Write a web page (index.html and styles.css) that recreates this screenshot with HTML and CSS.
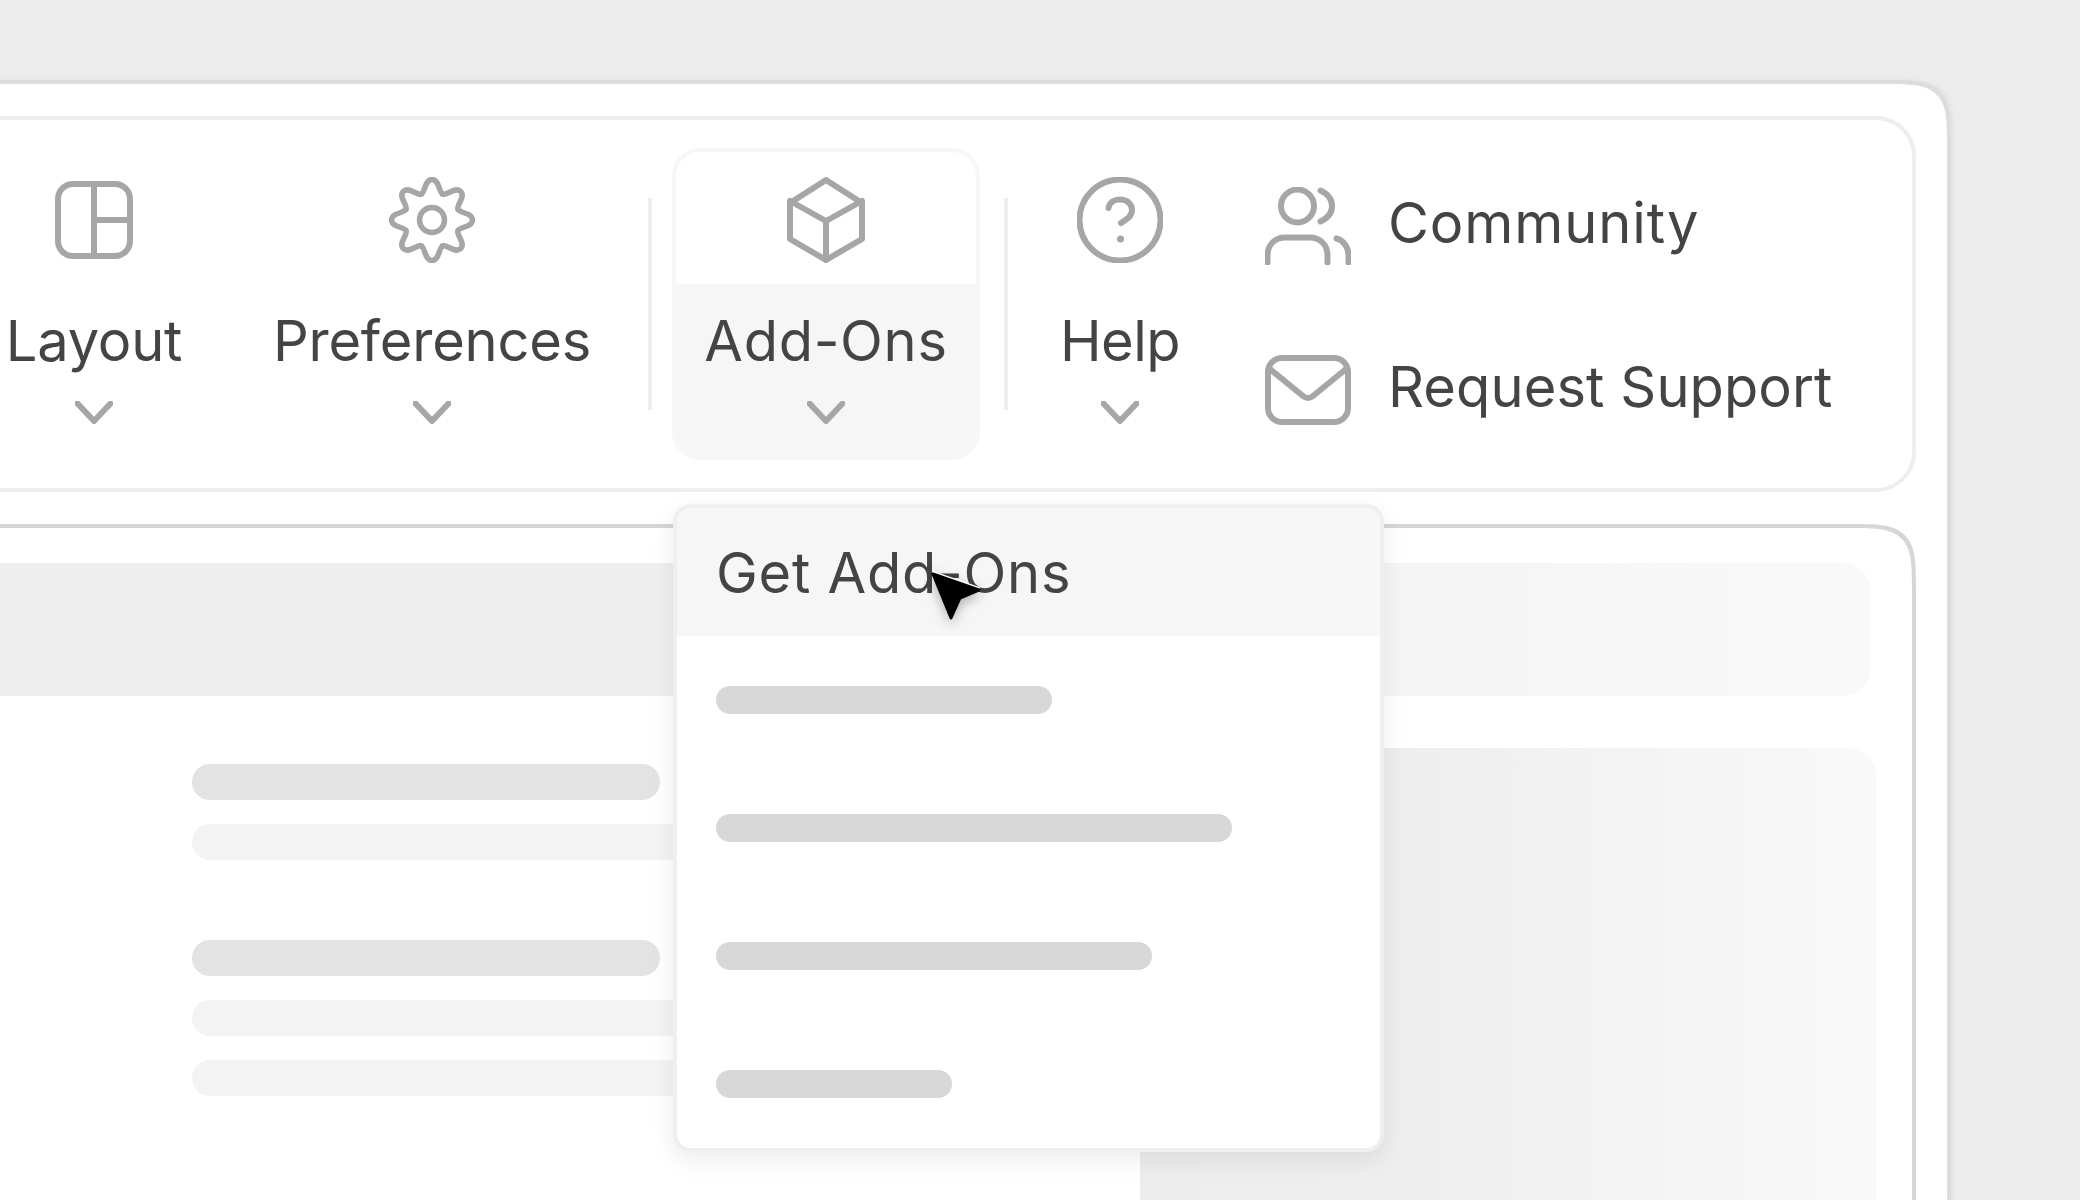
FILE: index.html
```html
<!DOCTYPE html>
<html lang="en">
<head>
<meta charset="utf-8">
<title>Add-Ons menu</title>
<link rel="stylesheet" href="styles.css">
</head>
<body>
<div class="window">
  <header class="toolbar">
    <div class="tool tool-layout">
      <div class="tool-top">
        <svg class="ico" width="78" height="78" viewBox="0 0 78 78"><rect x="3" y="3" width="72" height="72" rx="15"/><path d="M39 3V75M39 39H75"/></svg>
      </div>
      <div class="tool-bottom">
        <span class="tool-label">Layout</span>
        <svg class="ico chev" width="38" height="23" viewBox="0 0 38 23"><path d="M2.5 2.5L19 20L35.5 2.5"/></svg>
      </div>
    </div>
    <div class="tool tool-prefs">
      <div class="tool-top">
        <svg class="ico ico-gear" width="86" height="86" viewBox="-43 -43 86 86">
          <circle r="12.5"/>
          <path d="M-10.7-25.9C-6.500-28-7.500-40.5 0-40.5C7.500-40.5 6.500-28 10.7-25.9"/>
          <path transform="rotate(45)" d="M-10.7-25.9C-6.500-28-7.500-40.5 0-40.5C7.500-40.5 6.500-28 10.7-25.9"/>
          <path transform="rotate(90)" d="M-10.7-25.9C-6.500-28-7.500-40.5 0-40.5C7.500-40.5 6.500-28 10.7-25.9"/>
          <path transform="rotate(135)" d="M-10.7-25.9C-6.500-28-7.500-40.5 0-40.5C7.500-40.5 6.500-28 10.7-25.9"/>
          <path transform="rotate(180)" d="M-10.7-25.9C-6.500-28-7.500-40.5 0-40.5C7.500-40.5 6.500-28 10.7-25.9"/>
          <path transform="rotate(225)" d="M-10.7-25.9C-6.500-28-7.500-40.5 0-40.5C7.500-40.5 6.500-28 10.7-25.9"/>
          <path transform="rotate(270)" d="M-10.7-25.9C-6.500-28-7.500-40.5 0-40.5C7.500-40.5 6.500-28 10.7-25.9"/>
          <path transform="rotate(315)" d="M-10.7-25.9C-6.500-28-7.500-40.5 0-40.5C7.500-40.5 6.500-28 10.7-25.9"/>
        </svg>
      </div>
      <div class="tool-bottom">
        <span class="tool-label">Preferences</span>
        <svg class="ico chev" width="38" height="23" viewBox="0 0 38 23"><path d="M2.5 2.5L19 20L35.5 2.5"/></svg>
      </div>
    </div>
    <span class="divider divider-a"></span>
    <div class="tool tool-addons">
      <div class="tool-top">
        <svg class="ico" width="78" height="86" viewBox="0 0 78 86"><path d="M39 3L75 26V62L39 83L3 62V26Z"/><path d="M3 24L39 44L75 24M39 44V83"/></svg>
      </div>
      <div class="tool-bottom">
        <span class="tool-label tool-label-wide">Add-Ons</span>
        <svg class="ico chev" width="38" height="23" viewBox="0 0 38 23"><path d="M2.5 2.5L19 20L35.5 2.5"/></svg>
      </div>
      <div class="dropdown">
        <div class="dropdown-head">Get Add-Ons</div>
        <div class="dropdown-list">
          <span class="dd-pill dd-w1"></span>
          <span class="dd-pill dd-w2"></span>
          <span class="dd-pill dd-w3"></span>
          <span class="dd-pill dd-w4"></span>
        </div>
        <svg class="cursor" width="60" height="60" viewBox="0 0 60 60"><path class="cursor-halo" d="M8 8L54 24"/><path d="M8 8L54 24L35 32L26 52Z"/></svg>
      </div>
    </div>
    <span class="divider divider-b"></span>
    <div class="tool tool-help">
      <div class="tool-top">
        <svg class="ico" width="86" height="86" viewBox="0 0 86 86"><circle cx="43" cy="43" r="40.5"/><path d="M31.5 31C32.5 25 37.500 22.500 43 22.500C50 22.500 55 27 55 33C55 39.500 49 43 44 46"/><circle class="ico-dot" cx="43.500" cy="62" r="3.500"/></svg>
      </div>
      <div class="tool-bottom">
        <span class="tool-label tool-label-tight">Help</span>
        <svg class="ico chev" width="38" height="23" viewBox="0 0 38 23"><path d="M2.5 2.5L19 20L35.5 2.5"/></svg>
      </div>
    </div>
    <div class="links">
      <div class="link">
        <svg class="ico" width="86" height="78" viewBox="0 0 86 78"><circle cx="32.500" cy="19" r="16.500"/><path d="M55.500 3.500C63 7 67 13 67 19C67 25 63 31 55.500 34.500"/><path d="M2.500 75.500V68C2.500 58 10 50.500 20 50.500H45C55 50.500 62.500 58 62.500 68V75.500"/><path d="M71.500 51.500C78 53 83.500 60 83.500 68V75.500"/></svg>
        <span class="link-label link-label-wide">Community</span>
      </div>
      <div class="link">
        <svg class="ico" width="86" height="70" viewBox="0 0 86 70"><rect x="3" y="3" width="80" height="64" rx="14"/><path d="M5 14L38 41Q43 45 48 41L81 14"/></svg>
        <span class="link-label">Request Support</span>
      </div>
    </div>
  </header>
  <main class="panel">
    <div class="panel-bar"></div>
    <div class="panel-row">
      <div class="panel-left">
        <div class="group">
          <span class="pill pill-dark"></span>
          <span class="pill pill-light"></span>
        </div>
        <div class="group">
          <span class="pill pill-dark"></span>
          <span class="pill pill-light"></span>
          <span class="pill pill-light"></span>
        </div>
      </div>
      <div class="panel-right"></div>
    </div>
  </main>
</div>
</body>
</html>
```
FILE: styles.css
```css
* { box-sizing: border-box; }
html, body { margin: 0; height: 100%; }
body {
  background: #ececec;
  overflow: hidden;
  padding-top: 80px;
  font-family: "Inter", "Liberation Sans", sans-serif;
  color: #444;
}
.window {
  width: 2051px;
  height: 1120px;
  margin-left: -100px;
  padding: 32px 31px 0 32px;
  background: #fff;
  border: 4px solid #dcdcdc;
  border-bottom: 0;
  border-radius: 70px 70px 0 0;
  corner-shape: squircle;
  box-shadow: 2px 0 5px rgba(0,0,0,.05);
  display: flex;
  flex-direction: column;
  gap: 32px;
}
.toolbar {
  flex: none;
  height: 376px;
  padding-left: 60px;
  border: 4px solid #eee;
  border-radius: 40px;
  display: flex;
  align-items: center;
}
.tool {
  position: relative;
  flex: none;
  height: 312px;
  border: 4px solid transparent;
  border-radius: 28px;
}
.tool-layout { width: 188px; }
.tool-prefs { width: 312px; margin-left: 88px; }
.tool-addons {
  width: 308px;
  margin-left: 20px;
  border-color: #f7f7f7;
  background: #f6f6f6;
}
.tool-help { width: 120px; margin-left: 52px; }
.tool-top {
  height: 132px;
  padding-top: 25px;
  display: flex;
  justify-content: center;
  align-items: flex-start;
}
.tool-layout .tool-top { padding-top: 29px; }
.tool-addons .tool-top { background: #fff; border-radius: 24px 24px 0 0; }
.tool-bottom {
  display: flex;
  flex-direction: column;
  align-items: center;
  padding-top: 25px;
}
.tool-label {
  font-size: 56px;
  line-height: 64px;
  white-space: nowrap;
  letter-spacing: -.2px;
}
.tool-label-wide { letter-spacing: .7px; }
.tool-label-tight { letter-spacing: -.5px; }
.chev { margin-top: 28px; }
.ico {
  display: block;
  flex: none;
  fill: none;
  stroke: #a6a6a6;
  stroke-width: 6;
  stroke-linecap: round;
  stroke-linejoin: round;
}
.ico-gear { stroke-width: 5.5; }
.ico-dot { fill: #a6a6a6; stroke: none; }
.divider {
  flex: none;
  width: 4px;
  height: 212px;
  background: #eee;
}
.divider-a { margin-left: 60px; }
.divider-b { margin-left: 24px; }
.links {
  flex: none;
  align-self: flex-start;
  margin: 67px 0 0 85px;
  display: flex;
  flex-direction: column;
  gap: 86px;
}
.link {
  height: 78px;
  display: flex;
  align-items: center;
  gap: 37px;
}
.link-label {
  font-size: 56px;
  line-height: 64px;
  white-space: nowrap;
  letter-spacing: .1px;
  margin-top: -7px;
}
.link-label-wide { letter-spacing: .9px; }
.dropdown {
  position: absolute;
  z-index: 2;
  top: 352px;
  left: -3px;
  width: 711px;
  height: 648px;
  background: #fff;
  border: 4px solid #efefef;
  border-radius: 18px;
  box-shadow: 0 8px 24px rgba(0,0,0,.08);
}
.dropdown-head {
  height: 128px;
  padding: 33px 0 0 39px;
  background: #f6f6f6;
  border-radius: 14px 14px 0 0;
  font-size: 56px;
  line-height: 64px;
  letter-spacing: .75px;
}
.dropdown-list {
  padding: 50px 0 0 39px;
  display: flex;
  flex-direction: column;
  align-items: flex-start;
  gap: 100px;
}
.dd-pill {
  display: block;
  height: 28px;
  border-radius: 14px;
  background: #d8d8d8;
}
.dd-w1 { width: 336px; }
.dd-w2 { width: 516px; }
.dd-w3 { width: 436px; }
.dd-w4 { width: 236px; }
.cursor {
  position: absolute;
  left: 248px;
  top: 58px;
  fill: #000;
  stroke: #000;
  stroke-width: 3;
  stroke-linejoin: round;
  filter: drop-shadow(0 4px 6px rgba(0,0,0,.28));
}
.cursor-halo {
  stroke: #fff;
  stroke-width: 2;
  stroke-linecap: round;
  transform: translateY(-2px);
}
.panel {
  flex: 1;
  padding: 35px 36px 0 60px;
  border: 4px solid #d6d6d6;
  border-bottom: 0;
  border-radius: 70px 70px 0 0;
  corner-shape: squircle;
  display: flex;
  flex-direction: column;
  gap: 52px;
}
.panel-bar {
  flex: none;
  height: 133px;
  margin-right: 5px;
  background: linear-gradient(90deg, #eee 0%, #efefef 40%, #f9f9f9 100%);
  border-radius: 0 28px 28px 0;
}
.panel-row {
  flex: 1;
  display: flex;
}
.panel-left {
  flex: none;
  width: 1140px;
  padding: 16px 0 0 192px;
  display: flex;
  flex-direction: column;
  gap: 80px;
}
.group {
  display: flex;
  flex-direction: column;
  gap: 24px;
}
.pill {
  display: block;
  height: 36px;
  border-radius: 18px;
}
.pill-dark { width: 468px; background: #e3e3e3; }
.pill-light { width: 640px; background: #f3f3f3; }
.panel-right {
  flex: 1;
  background: linear-gradient(90deg, #ededed 0%, #eee 35%, #f9f9f9 100%);
  border-radius: 0 28px 0 0;
}
```
